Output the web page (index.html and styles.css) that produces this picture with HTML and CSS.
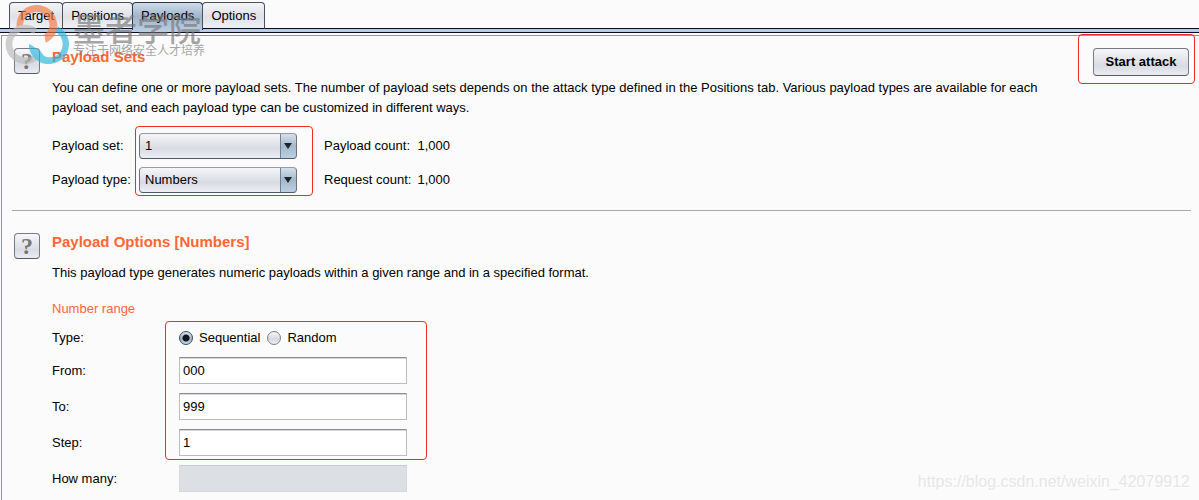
FILE: index.html
```html
<!DOCTYPE html>
<html lang="en">
<head>
  <meta charset="UTF-8">
  <title>Intruder - Payloads</title>
  <meta name="viewport" content="width=device-width, initial-scale=1">
  <link rel="stylesheet" href="styles.css">
</head>
<body>
  <nav class="tabs">
    <button type="button" class="tab">Target</button>
    <button type="button" class="tab">Positions</button>
    <button type="button" class="tab active">Payloads</button>
    <button type="button" class="tab">Options</button>
  </nav>

  <main class="panel">
    <section class="section">
      <button type="button" class="help" aria-label="Help">?</button>
      <div class="content">
        <h2>Payload Sets</h2>
        <p class="description">You can define one or more payload sets. The number of payload sets depends on the attack type defined in the Positions tab. Various payload types are available for each payload set, and each payload type can be customized in different ways.</p>
        <div class="sets">
          <div class="labels">
            <label for="payloadSet">Payload set:</label>
            <label for="payloadType">Payload type:</label>
          </div>
          <div class="combos marked">
            <div class="combo">
              <select id="payloadSet"><option>1</option></select>
            </div>
            <div class="combo">
              <select id="payloadType"><option>Numbers</option></select>
            </div>
          </div>
          <div class="counts">
            <span>Payload count:</span><span>1,000</span>
            <span>Request count:</span><span>1,000</span>
          </div>
        </div>
      </div>
      <div class="attack marked">
        <button type="button" class="start">Start attack</button>
      </div>
    </section>

    <hr>

    <section class="section">
      <button type="button" class="help" aria-label="Help">?</button>
      <div class="content">
        <h2>Payload Options [Numbers]</h2>
        <p class="description">This payload type generates numeric payloads within a given range and in a specified format.</p>
        <h3>Number range</h3>
        <div class="range">
          <div class="names">
            <span>Type:</span>
            <label for="from">From:</label>
            <label for="to">To:</label>
            <label for="step">Step:</label>
            <label for="howMany">How many:</label>
          </div>
          <div class="fields">
            <div class="fields-main marked">
              <div class="radios">
                <label><input type="radio" name="type" checked>Sequential</label>
                <label><input type="radio" name="type">Random</label>
              </div>
              <input type="text" id="from" value="000">
              <input type="text" id="to" value="999">
              <input type="text" id="step" value="1">
            </div>
            <input type="text" id="howMany" disabled>
          </div>
        </div>
      </div>
    </section>
  </main>

  <div class="brand">
    <svg viewBox="0 0 210 210">
      <path fill="#f5773f" d="M50 82C48 43 74 15 110 15C146 15 172 43 172 79C172 99 158 120 137 128L133 103C146 95 151 77 147 65C142 46 129 35 110 35C90 35 72 50 68 77C62 77 56 79 50 82Z"/>
      <path fill="#b9b9b9" d="M111 86C99 77 89 74 76 74C43 74 17 100 17 133C17 165 43 192 76 192C91 192 104 187 114 179L104 164C95 170 87 172 77 172C54 172 37 155 37 133C37 111 54 94 75 94C86 94 95 98 102 103Z"/>
      <path fill="#28b5dc" d="M87 131L121 152C128 165 135 172 150 172C172 172 188 154 188 132C188 116 179 103 166 97L174 80C194 89 207 108 207 132C207 165 181 192 147 192C111 192 85 164 87 131Z"/>
    </svg>
    <div class="brand-text">
      <div class="brand-name">墨者学院</div>
      <div class="brand-motto">专注于网络安全人才培养</div>
    </div>
  </div>
  <div class="source">https://blog.csdn.net/weixin_42079912</div>
</body>
</html>
```
FILE: styles.css
```css
* {
  box-sizing: border-box;
}
body {
  position: relative;
  margin: 0;
  background: #fbfbfb;
  color: #000;
  font-family: "Liberation Sans", Arial, sans-serif;
  font-size: 13px;
  line-height: 20px;
}
button,
input,
select {
  font: inherit;
  color: inherit;
  margin: 0;
}
h2,
h3,
p {
  margin: 0;
}
h2,
h3 {
  color: #ff6633;
}
h2 {
  font-size: 15px;
}
h3 {
  margin: 16px 0 8px;
  font-size: 13px;
  font-weight: normal;
}

/* tab strip */
.tabs {
  display: flex;
  height: 33px;
  padding: 2px 9px 0;
  background: linear-gradient(#fbfbfb 28px, #080c20 28px, #080c20 29px, #b8cce4 29px, #b8cce4 32px, #080c20 32px);
}
.tab {
  height: 27px;
  padding: 0 8px;
  border: 1px solid #4c5160;
  border-bottom-color: #080c20;
  border-radius: 4px 4px 0 0;
  background: linear-gradient(#f4f4f7, #dfe1e7 55%, #eff0f4);
}
.tab + .tab {
  margin-left: -1px;
}
.tab.active {
  height: 28px;
  padding-bottom: 2px;
  border-color: #26384f;
  border-bottom: 0;
  background: linear-gradient(#d0dce8, #9fb5cb 50%, #b8cce0);
}

.panel {
  margin: 2px 0 0 1px;
  padding: 11px 8px 8px 10px;
  border: solid #9296a2;
  border-width: 1px 0 0 1px;
}
.section {
  display: flex;
  align-items: flex-start;
  padding: 0 2px;
}
.help {
  flex: none;
  width: 26px;
  height: 26px;
  margin: 1px 12px 0 0;
  padding: 0;
  border: 1px solid #777a82;
  border-bottom-color: #555a64;
  border-radius: 4px;
  background: linear-gradient(#f7f7fa, #d9dce3 65%, #ebecf2);
  color: #777;
  font-family: "Liberation Serif", "Times New Roman", serif;
  font-size: 24px;
  font-weight: bold;
  line-height: 24px;
}
.content {
  flex: 1;
}
.description {
  max-width: 1000px;
  margin-top: 11px;
}
hr {
  height: 1px;
  margin: 17px 0 21px;
  border: 0;
  background: #a5a8b2;
}

/* red outline round the controls to fill in */
.marked {
  position: relative;
}
.marked::after {
  content: "";
  position: absolute;
  inset: -7px -16px -3px -4px;
  border: 1px solid #f5291c;
  border-radius: 4px;
  pointer-events: none;
}

.sets {
  display: flex;
  margin-top: 15px;
}
.labels,
.combos {
  display: grid;
  grid-auto-rows: 26px;
  gap: 8px;
  align-items: center;
}
.labels {
  width: 87px;
}
.combo {
  position: relative;
}
.combo::after {
  content: "";
  position: absolute;
  top: 10px;
  right: 5px;
  border: solid transparent;
  border-width: 6px 4px 0;
  border-top-color: #1d242c;
  pointer-events: none;
}
.combo select {
  display: block;
  width: 158px;
  height: 26px;
  padding: 0 5px;
  appearance: none;
  border: 1px solid #6d727d;
  border-top-color: #9599a2;
  border-bottom-color: #4f5966;
  border-radius: 4px;
  background:
    linear-gradient(90deg, #6f8297 1px, transparent 1px) right / 16px 100% no-repeat,
    linear-gradient(#d5e0eb, #a3b8cc 50%, #bdd0e3) right / 16px 100% no-repeat,
    linear-gradient(#f6f6f9, #d8dbe2 60%, #eeeff4);
}
.counts {
  display: grid;
  grid-template-columns: auto auto;
  grid-auto-rows: 26px;
  gap: 8px 6px;
  align-items: center;
  margin-left: 27px;
}

.attack {
  flex: none;
  margin-top: 1px;
}
.attack::after {
  inset: -14px -6px -8px -15px;
}
.start {
  display: block;
  width: 96px;
  height: 28px;
  padding: 0;
  border: 1px solid #777b85;
  border-bottom-color: #555a64;
  border-radius: 4px;
  background: linear-gradient(#f6f6f9, #d8dbe2 65%, #ebecf2);
  font-weight: bold;
}

/* number range */
.range {
  display: flex;
}
.names,
.fields,
.fields-main {
  display: grid;
  grid-auto-rows: 27px;
  gap: 9px;
  align-items: center;
}
.names,
.fields-main {
  grid-template-rows: 21px;
}
.names {
  width: 127px;
}
.fields {
  width: 228px;
  grid-template-rows: 129px;
}
.fields-main::after {
  inset: -6px -20px -4px -14px;
}
.radios {
  display: flex;
  gap: 7px;
}
.radios label {
  display: flex;
  align-items: center;
  gap: 6px;
}
.radios input {
  appearance: none;
  width: 14px;
  height: 14px;
  border: 1px solid #7b7f89;
  border-radius: 50%;
  background: linear-gradient(#f7f7f9, #d5d8df 60%, #eff0f5);
}
.radios input:checked {
  border-color: #34485f;
  background: radial-gradient(circle, #11161d 3px, transparent 4px), linear-gradient(#dbe5ef, #9bb1c7 60%, #c9dbea);
}
.fields input[type="text"] {
  width: 100%;
  height: 27px;
  padding: 0 3px;
  border: 1px solid #bcbcbf;
  border-top-color: #8c8c90;
  border-radius: 0;
  background: #fff;
  box-shadow: inset 0 1px #d8d8dc;
}
.fields input[type="text"]:disabled {
  border-color: #d5d8de;
  border-top-color: #c6cad1;
  background: #dce0e5;
  box-shadow: none;
}

/* watermarks */
.brand {
  position: absolute;
  top: 0;
  left: 0;
  display: flex;
  opacity: 0.65;
  pointer-events: none;
}
.brand svg {
  width: 70px;
  height: 70px;
}
.brand-text {
  padding: 16px 0 0 3px;
  color: #777;
  font-family: "Liberation Sans", "Noto Sans CJK SC", sans-serif;
  white-space: nowrap;
}
.brand-name {
  font-size: 32px;
  font-weight: 500;
  line-height: 28px;
}
.brand-motto {
  font-size: 12px;
  line-height: 14px;
}
.source {
  position: absolute;
  right: 9px;
  bottom: 8px;
  color: #e6e6e6;
  font-size: 16px;
  text-shadow: 1px 1px #fff;
  pointer-events: none;
}
```
